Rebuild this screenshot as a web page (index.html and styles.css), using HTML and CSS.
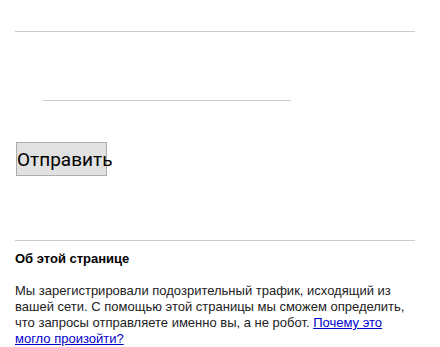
FILE: index.html
```html
<!DOCTYPE html>
<html lang="ru">
<head>
  <meta charset="UTF-8">
  <meta name="viewport" content="width=device-width, initial-scale=1.0">
  <title>Проверка</title>
  <link rel="stylesheet" href="styles.css">
</head>
<body>
  <div class="page">
    <hr class="rule">
    <!-- Check form -->
    <form id="captcha-form" action="/sorry/index" method="POST">
      <div class="captcha-line"></div>
      <button type="submit" class="submit">Отправить</button>
    </form>
    <hr class="rule rule-bottom">
    <!-- Info block -->
    <div class="about">
      <h2 class="about-title">Об этой странице</h2>
      <p class="about-text">Мы зарегистрировали подозрительный трафик, исходящий из вашей сети. С помощью этой страницы мы сможем определить, что запросы отправляете именно вы, а не робот. <a href="#" class="about-link">Почему это могло произойти?</a></p>
    </div>
  </div>
</body>
</html>
```

FILE: styles.css
```css
body {
  margin: 0;
  background: #fff;
  color: #222;
  font-family: "Liberation Sans", Arial, sans-serif;
  font-size: 13px;
  line-height: 16px;
}

.page {
  width: 400px;
  padding: 31px 0 0 15px;
}

.rule {
  margin: 0;
  height: 0;
  border: none;
  border-top: 1px solid #ccc;
}

.captcha-line {
  width: 248px;
  margin: 68px 0 0 28px;
  border-top: 1px solid #ccc;
}

.submit {
  display: block;
  width: 91px;
  height: 34px;
  margin: 41px 0 0 1px;
  padding: 0;
  background-color: #e1e1e1;
  border: 1px solid #adadad;
  color: #000;
  font-family: Roboto, "Liberation Sans", sans-serif;
  font-size: 19px;
  cursor: pointer;
}

.rule-bottom {
  margin-top: 64px;
}

.about-title {
  margin: 10px 0 0;
  font-size: 13px;
  font-weight: bold;
  line-height: 16px;
  color: #000;
}

.about-text {
  margin: 16px 0 0;
}

.about-link {
  color: #0000cc;
}
```
